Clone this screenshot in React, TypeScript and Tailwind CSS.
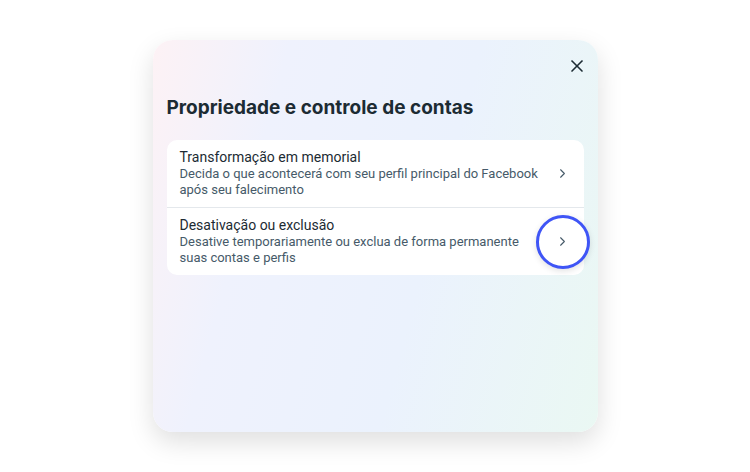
import { X, ChevronRight } from "lucide-react";

type Item = {
  title: string;
  description: string;
  highlighted?: boolean;
};

const ITEMS: Item[] = [
  {
    title: "Transformação em memorial",
    description: "Decida o que acontecerá com seu perfil principal do Facebook após seu falecimento",
  },
  {
    title: "Desativação ou exclusão",
    description: "Desative temporariamente ou exclua de forma permanente suas contas e perfis",
    highlighted: true,
  },
];

function Row({ item, last }: { item: Item; last: boolean }) {
  return (
    <div className={`relative flex items-center pl-[13px] pr-[13px] ${last ? "" : "border-b border-[#e4e8ec]"}`}>
      <div className="flex-1 pt-[8px] pb-[9px] pr-2">
        <div className="text-[14px] leading-[18px] text-[#1c2b33]">{item.title}</div>
        <div className="text-[13px] leading-[16px] text-[#465a69]">{item.description}</div>
      </div>
      <div className="relative flex h-4 w-4 items-center justify-center">
        {item.highlighted && (
          <div className="absolute left-1/2 top-1/2 h-[54px] w-[54px] -translate-x-1/2 -translate-y-1/2 rounded-full border-[3px] border-[#3f55f6] bg-white shadow-[0_2px_6px_rgba(0,0,0,0.12)]" />
        )}
        <ChevronRight className="relative h-[15px] w-[15px] text-[#465a69]" strokeWidth={1.75} />
      </div>
    </div>
  );
}

export default function App() {
  return (
    <div
      className="flex h-screen w-full items-center justify-center bg-white"
      style={{ fontFamily: "Roboto, 'Noto Sans', sans-serif" }}
    >
      <div className="flex h-[392px] w-[445px] flex-col rounded-[20px] bg-[linear-gradient(105deg,#fdf2f5_0%,#eff2fd_25%,#ebf2fd_60%,#eaf8f3_100%)] px-[14px] shadow-[0_10px_26px_rgba(0,0,0,0.13)]">
        <div className="flex justify-end pt-[14px]">
          <button className="-mr-[5px] flex h-6 w-6 items-center justify-center text-[#1c2b33]">
            <X className="h-[20px] w-[20px]" strokeWidth={2} />
          </button>
        </div>
        <h1
          className="mt-[18px] text-[19px] font-bold leading-[24px] text-[#1c2b33]"
          style={{ fontFamily: "Inter, 'Noto Sans', sans-serif" }}
        >
          Propriedade e controle de contas
        </h1>
        <div className="mt-[20px] rounded-[10px] bg-white">
          {ITEMS.map((item, i) => (
            <Row key={item.title} item={item} last={i === ITEMS.length - 1} />
          ))}
        </div>
      </div>
    </div>
  );
}
